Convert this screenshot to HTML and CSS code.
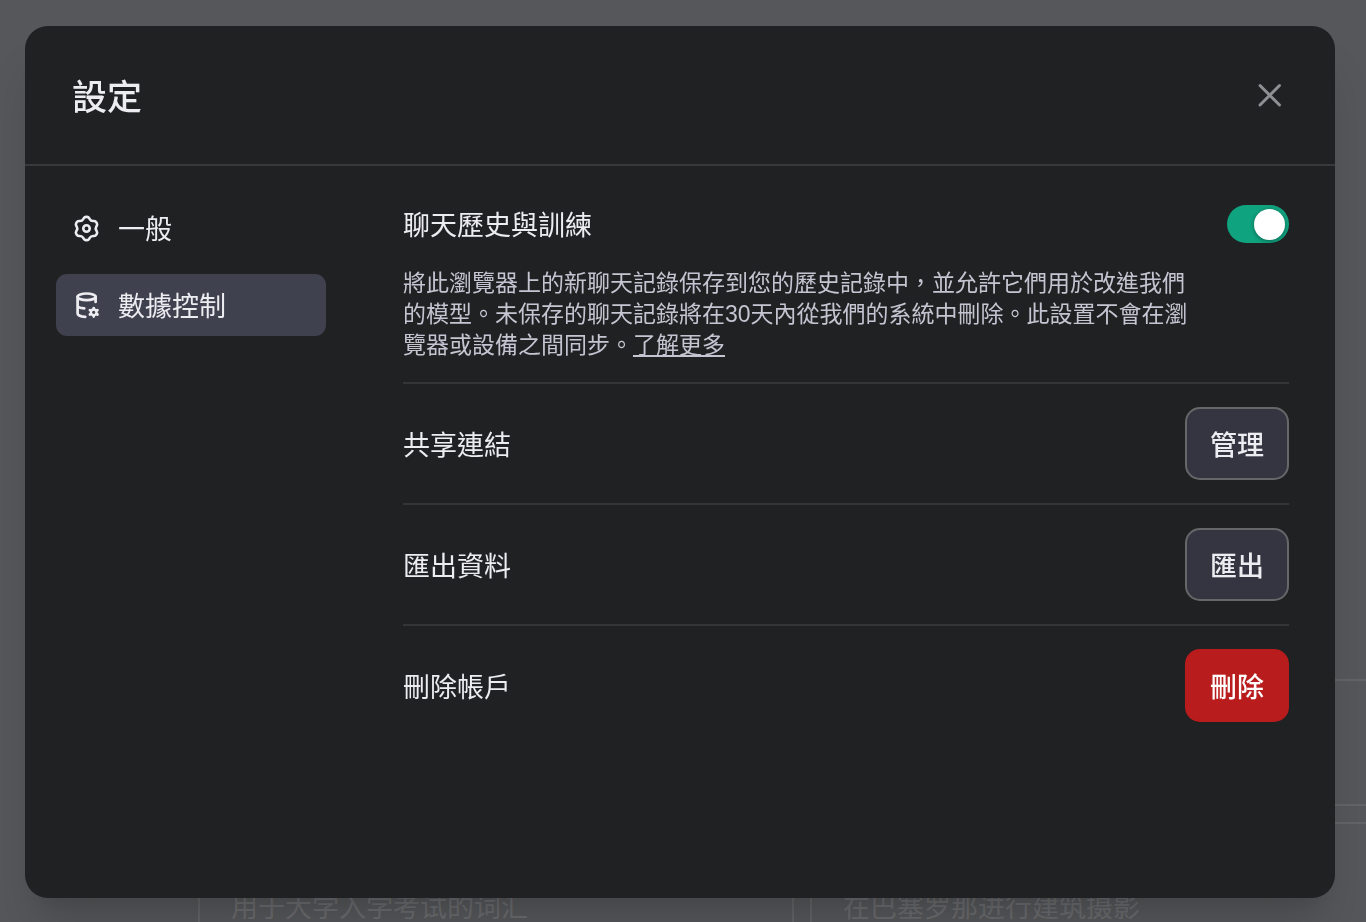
FILE: index.html
```
<!DOCTYPE html>
<html lang="zh-Hant">
<head>
  <meta charset="UTF-8">
  <meta name="viewport" content="width=device-width, initial-scale=1.0">
  <title>設定</title>
  <link rel="stylesheet" href="styles.css">
</head>
<body>
  <main class="page" lang="zh-Hans">
    <div class="prompts">
      <div class="prompt"></div>
      <div class="prompt"></div>
      <div class="prompt">用于大学入学考试的词汇</div>
      <div class="prompt">在巴塞罗那进行建筑摄影</div>
    </div>
  </main>

  <div class="overlay">
    <div class="modal" role="dialog" aria-modal="true" aria-labelledby="modalTitle">
      <header class="modal-header">
        <h2 id="modalTitle">設定</h2>
        <button type="button" class="close" aria-label="關閉">
          <svg width="36" height="36" viewBox="0 0 36 36" fill="none" stroke="currentColor" stroke-width="3" stroke-linecap="round">
            <path d="M8 8.500l19.500 19.500M27.500 8.500L8 28"/>
          </svg>
        </button>
      </header>

      <div class="modal-body">
        <nav class="tabs">
          <button type="button" class="tab">
            <svg width="31" height="31" viewBox="0 0 24 24" fill="none" stroke="currentColor" stroke-width="2" stroke-linejoin="round">
              <path d="M11.644 3c-.709 0-1.365.375-1.724.986l-.424.72a3 3 0 0 1-2.561 1.479l-.835.007a2 2 0 0 0-1.716 1l-.356.616a2 2 0 0 0-.008 1.986l.412.727a3 3 0 0 1 0 2.958l-.412.727a2 2 0 0 0 .008 1.986l.356.616a2 2 0 0 0 1.716 1l.835.007a3 3 0 0 1 2.561 1.479l.424.72c.359.611 1.015.986 1.724.986h.712c.709 0 1.365-.375 1.724-.986l.424-.72a3 3 0 0 1 2.561-1.479l.835-.007a2 2 0 0 0 1.716-1l.356-.616a2 2 0 0 0 .008-1.986l-.412-.727a3 3 0 0 1 0-2.958l.412-.727a2 2 0 0 0-.008-1.986l-.356-.616a2 2 0 0 0-1.716-1l-.835-.007a3 3 0 0 1-2.561-1.479l-.424-.72A2 2 0 0 0 12.356 3z"/>
              <circle cx="12" cy="12" r="2.5"/>
            </svg>
            一般
          </button>
          <button type="button" class="tab active" aria-current="page">
            <svg width="31" height="31" viewBox="0 0 31 31" fill="none" stroke="currentColor" stroke-width="2.700" stroke-linecap="round">
              <ellipse cx="15.600" cy="6.800" rx="9" ry="3.300"/>
              <path d="M6.600 6.800v16.700c0 1.800 3.600 3.100 7.700 3.300M24.600 6.800v5.200M6.600 15.200c0 1.700 3 2.900 6.700 3.100"/>
              <circle cx="22.700" cy="22.300" r="2.800" stroke-width="2.300"/>
              <path d="M22.700 19v-1M22.700 25.600v1M19.800 20.600l-.9-.5M25.600 24l.9.5M19.800 24l-.9.5M25.600 20.600l.9-.5" stroke-width="2.700"/>
            </svg>
            數據控制
          </button>
        </nav>

        <section class="content">
          <div class="setting history">
            <div class="history-row">
              <label for="history">聊天歷史與訓練</label>
              <input type="checkbox" role="switch" id="history" class="switch" checked>
            </div>
            <p class="description">將此瀏覽器上的新聊天記錄保存到您的歷史記錄中，並允許它們用於改進我們的模型。未保存的聊天記錄將在<span class="number">30</span>天內從我們的系統中刪除。此設置不會在瀏覽器或設備之間同步。<a href="#">了解更多</a></p>
          </div>
          <div class="setting">
            <span id="shareLabel">共享連結</span>
            <button type="button" class="btn" aria-describedby="shareLabel">管理</button>
          </div>
          <div class="setting">
            <span id="exportLabel">匯出資料</span>
            <button type="button" class="btn" aria-describedby="exportLabel">匯出</button>
          </div>
          <div class="setting">
            <span id="deleteLabel">刪除帳戶</span>
            <button type="button" class="btn danger" aria-describedby="deleteLabel">刪除</button>
          </div>
        </section>
      </div>
    </div>
  </div>
</body>
</html>
```

FILE: styles.css
```
* {
  box-sizing: border-box;
}

body {
  margin: 0;
  background: #56575a;
  color: #ececf1;
  font-family: "Noto Sans CJK TC", sans-serif;
  font-size: 27px;
  line-height: 38px;
  overflow: hidden;
}

button {
  font: inherit;
  color: inherit;
  cursor: pointer;
}

svg {
  display: block;
  flex: none;
}

/* page behind the dialog */
.page {
  display: flex;
  flex-direction: column;
  justify-content: flex-end;
  height: 100vh;
  padding-left: 198px;
  font-family: "Liberation Sans", "Noto Sans CJK SC", sans-serif;
}

.prompts {
  display: grid;
  grid-template-columns: 596px 596px;
  gap: 16px;
  margin-bottom: -27px;
}

.prompt {
  display: flex;
  align-items: flex-end;
  height: 127px;
  padding: 20px 31px;
  border: 2px solid #636466;
  color: #6a6b6e;
}

.overlay {
  position: fixed;
  inset: 0;
  display: grid;
  padding: 26px 31px 24px 25px;
}

.modal {
  background: #202123;
  border-radius: 23px;
  box-shadow: 0 38px 48px -10px rgba(0, 0, 0, 0.15), 0 15px 19px -11px rgba(0, 0, 0, 0.1);
}

.modal-header {
  display: flex;
  align-items: center;
  justify-content: space-between;
  height: 140px;
  padding: 0 47px;
  border-bottom: 2px solid #38393b;
}

.modal-header h2 {
  margin: 0;
  font-size: 35px;
  font-weight: 500;
  line-height: 46px;
}

.close {
  padding: 0;
  border: 0;
  background: none;
  color: #8f9093;
}

.modal-body {
  display: flex;
  gap: 77px;
  padding: 31px 46px 31px 31px;
}

.tabs {
  display: flex;
  flex: none;
  flex-direction: column;
  gap: 15px;
  width: 270px;
}

.tab {
  display: flex;
  align-items: center;
  gap: 16px;
  height: 62px;
  padding: 0 15px;
  border: 0;
  border-radius: 11px;
  background: none;
}

.tab.active {
  background: #40414f;
}

.content {
  flex: 1;
  padding-top: 8px;
}

.setting {
  display: flex;
  align-items: center;
  justify-content: space-between;
  padding: 23px 0;
  border-bottom: 2px solid #343537;
}

.setting:last-child {
  border-bottom: 0;
}

.history {
  display: block;
  padding-top: 0;
}

.history-row {
  display: flex;
  align-items: center;
  justify-content: space-between;
}

.description {
  width: 90%;
  margin: 23px 0 0;
  color: #c5c5d2;
  font-size: 23px;
  line-height: 31px;
}

.description a {
  color: inherit;
}

.number {
  font-family: "Liberation Sans", sans-serif;
  line-height: 1;
}

.switch {
  appearance: none;
  width: 62px;
  height: 38px;
  margin: 0;
  padding: 4px;
  border-radius: 19px;
  background: #565869;
  cursor: pointer;
}

.switch::before {
  content: "";
  display: block;
  width: 31px;
  height: 31px;
  border-radius: 50%;
  background: #fff;
  box-shadow: 0 1px 4px rgba(0, 0, 0, 0.4);
}

.switch:checked {
  background: #10a37f;
}

.switch:checked::before {
  margin-left: auto;
}

.btn {
  width: 104px;
  height: 73px;
  padding: 0;
  border: 2px solid #666769;
  border-radius: 15px;
  background: #343541;
  font-weight: 500;
}

.btn.danger {
  border-color: #b91c1c;
  background: #b91c1c;
  color: #fff;
}
```
